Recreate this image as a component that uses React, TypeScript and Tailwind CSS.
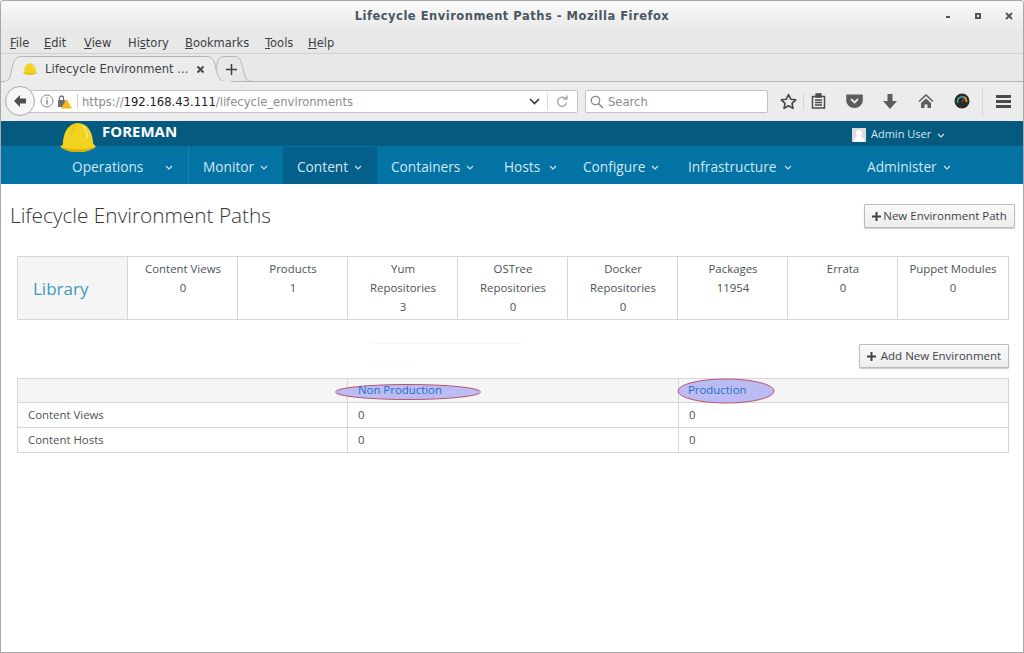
import React from "react";

const chrome = "[font-family:DejaVu_Sans,sans-serif]";
const web = "[font-family:Open_Sans,sans-serif]";

function Chevron({ className = "" }: { className?: string }) {
  return (
    <svg width="8" height="5" viewBox="0 0 8 5" className={className}>
      <path d="M1 1l3 3 3-3" fill="none" stroke="currentColor" strokeWidth="1.1" />
    </svg>
  );
}

function Hat({ size = 38 }: { size?: number }) {
  return (
    <svg width={size} height={size * 0.84} viewBox="0 0 38 32">
      <path d="M3 24C3 11 9 1 19 1s16 10 16 22l3 3c-4 4-11 6-19 6S4 30 0 26z" fill="#f2d31f" />
      <path d="M0 26c4 4 11 6 19 6s15-2 19-6c-6 2-12 3-19 3S6 28 0 26z" fill="#d8b00d" />
      <path d="M24 4c3 3 5 8 5 13" stroke="#f9ec8a" strokeWidth="1.500" fill="none" />
      <path d="M17 2c-3 4-5 9-5 14" stroke="#e2c116" strokeWidth="1.200" fill="none" />
    </svg>
  );
}

function Menu({ u, rest, pre = "", left }: { u: string; rest: string; pre?: string; left: string }) {
  return (
    <span className={`absolute top-[36px] text-[11.5px] leading-[15px] text-[#3a3f42] ${left}`}>
      {pre}
      <span className="underline">{u}</span>
      {rest}
    </span>
  );
}

function NavItem({ label, left, chev }: { label: string; left: string; chev: string }) {
  return (
    <>
      <span className={`absolute top-[157px] text-[13.7px] leading-[20px] text-[#d3e8f2] ${left}`}>{label}</span>
      <Chevron className={`absolute top-[165px] text-[#d3e8f2] ${chev}`} />
    </>
  );
}

function Stat({ lines, value }: { lines: string[]; value: string }) {
  return (
    <div className="w-[110px] h-full border-l border-[#d6d6d6] flex flex-col items-center pt-[2px] pl-[1px] text-[11.4px] leading-[19px] text-[#4d5258]">
      {lines.map((l) => (
        <div key={l}>{l}</div>
      ))}
      <div>{value}</div>
    </div>
  );
}

function Button({ label, className, gap }: { label: string; className: string; gap: string }) {
  return (
    <div
      className={`absolute flex items-center justify-center h-[24px] border border-[#bbb] rounded-[1px] bg-gradient-to-b from-[#fafafa] to-[#ededed] shadow-[0_1px_1px_rgba(0,0,0,0.2)] text-[11.5px] font-medium text-[#3f4448] ${gap} ${className}`}
    >
      <svg width="9" height="9" viewBox="0 0 9 9">
        <path d="M4.5 0v9M0 4.5h9" stroke="#3f4448" strokeWidth="2" />
      </svg>
      <span>{label}</span>
    </div>
  );
}

export default function App() {
  return (
    <div className={`relative w-[1024px] h-[653px] overflow-hidden bg-white ${web}`}>
      {/* title bar */}
      <div className={`absolute left-0 top-0 w-full h-[32px] bg-gradient-to-b from-[#fafafa] to-[#e8e8e8] ${chrome}`}>
        <div className="text-center pt-[9px] text-[11.5px] leading-[15px] font-bold tracking-[0.5px] text-[#4c5660]">
          Lifecycle Environment Paths - Mozilla Firefox
        </div>
      </div>
      <div className="absolute left-[946px] top-[16px] w-[4px] h-[2px] bg-[#4c5660]" />
      <div className="absolute left-[975px] top-[13px] w-[6px] h-[6px] border-2 border-[#4c5660]" />
      <svg className="absolute left-[1005px] top-[12px]" width="8" height="8" viewBox="0 0 8 8">
        <path d="M1 1l6 6M7 1l-6 6" stroke="#4c5660" strokeWidth="1.8" />
      </svg>

      {/* menu bar */}
      <div className="absolute left-0 top-[32px] w-full h-[22px] bg-[#e8e8e8] border-b border-[#cfcfcf]" />
      <div className={chrome}>
        <Menu left="left-[10px]" u="F" rest="ile" />
        <Menu left="left-[44px]" u="E" rest="dit" />
        <Menu left="left-[84px]" u="V" rest="iew" />
        <Menu left="left-[128px]" pre="Hi" u="s" rest="tory" />
        <Menu left="left-[185px]" u="B" rest="ookmarks" />
        <Menu left="left-[265px]" u="T" rest="ools" />
        <Menu left="left-[308px]" u="H" rest="elp" />
      </div>

      {/* tab bar */}
      <div className="absolute left-0 top-[54px] w-full h-[28px] bg-[#e8e8e8] border-b border-[#b4b4b4]" />
      <svg className="absolute left-0 top-[54px]" width="262" height="29" viewBox="0 0 262 29">
        <path d="M0 27.5h4c5 0 6-4 8-13 2-9 4-12 10-12h184c6 0 8 3 10 12 2 9 4 13 9 13" fill="#ececec" stroke="#b4b4b4" />
        <path d="M216 14.5c2-9 3-12 8-12h10c5 0 7 3 9 12 2 9 3 13 9 13" fill="none" stroke="#b4b4b4" />
        <path d="M5 28h226" stroke="#ececec" strokeWidth="2" />
      </svg>
      <div className="absolute left-[23px] top-[63px]">
        <Hat size={14} />
      </div>
      <div className={`absolute left-[45px] top-[61px] text-[11.6px] leading-[16px] text-[#3f4447] ${chrome}`}>
        Lifecycle Environment ...
      </div>
      <svg className="absolute left-[196px] top-[65px]" width="9" height="9" viewBox="0 0 9 9">
        <path d="M1.500 1.500l6 6M7.500 1.500l-6 6" stroke="#4a4a4a" strokeWidth="2" />
      </svg>
      <svg className="absolute left-[225px] top-[63px]" width="13" height="13" viewBox="0 0 13 13">
        <path d="M6.500 1v11M1 6.500h11" stroke="#3f3f3f" strokeWidth="1.5" />
      </svg>

      {/* nav bar */}
      <div className="absolute left-0 top-[82px] w-full h-[39px] bg-[#ececec]" />
      <div className={`absolute left-[24px] top-[90px] w-[554px] h-[23px] bg-white border border-[#c2c2c2] rounded-[2px] ${chrome}`}>
        <div className="absolute left-[57px] top-[3px] text-[11.6px] leading-[17px] text-[#8c8c8c] whitespace-nowrap">
          https://<span className="text-[#222]">192.168.43.111</span>/lifecycle_environments
        </div>
      </div>
      <div className="absolute left-[5px] top-[86px] w-[30px] h-[30px] rounded-full bg-[#f6f6f6] border border-[#a8a8a8]" />
      <svg className="absolute left-[13px] top-[94px]" width="14" height="14" viewBox="0 0 14 14">
        <path d="M7 1L1 7l6 6V9.500h6v-5H7z" fill="#4f4f4f" />
      </svg>
      <svg className="absolute left-[40px] top-[94px]" width="14" height="14" viewBox="0 0 14 14">
        <circle cx="7" cy="7" r="6" fill="none" stroke="#8a8a8a" />
        <path d="M7 6v4.500M7 3.500v1.300" stroke="#777" strokeWidth="1.300" />
      </svg>
      <svg className="absolute left-[57px] top-[94px]" width="15" height="15" viewBox="0 0 15 15">
        <rect x="1" y="6" width="7" height="7" fill="#6e6e6e" />
        <path d="M2.500 6V4a2 2 0 0 1 4 0v2" fill="none" stroke="#6e6e6e" strokeWidth="1.300" />
        <path d="M9.500 5L15 14.500H4z" fill="#f2b91a" />
      </svg>
      <div className="absolute left-[77px] top-[94px] w-px h-[15px] bg-[#cfcfcf]" />
      <svg className="absolute left-[529px] top-[98px]" width="11" height="7" viewBox="0 0 11 7">
        <path d="M1 1l4.500 4.500L10 1" fill="none" stroke="#3a3a3a" strokeWidth="1.600" />
      </svg>
      <div className="absolute left-[547px] top-[93px] w-px h-[17px] bg-[#dcdcdc]" />
      <svg className="absolute left-[556px] top-[95px]" width="13" height="13" viewBox="0 0 13 13">
        <path d="M10.500 7.500A4.500 4.500 0 1 1 8.500 3H11M11 .5V4H7.500" fill="none" stroke="#a6a6a6" strokeWidth="1.300" />
      </svg>
      <div className={`absolute left-[585px] top-[90px] w-[183px] h-[23px] bg-white border border-[#c2c2c2] rounded-[2px] ${chrome}`}>
        <svg className="absolute left-[4px] top-[4px]" width="14" height="14" viewBox="0 0 14 14">
          <circle cx="5.500" cy="5.500" r="4.200" fill="none" stroke="#888" strokeWidth="1.300" />
          <path d="M8.500 8.500L13 13" stroke="#888" strokeWidth="1.500" />
        </svg>
        <div className="absolute left-[22px] top-[3px] text-[11.6px] leading-[17px] text-[#8a8a8a]">Search</div>
      </div>

      {/* toolbar icons */}
      <svg className="absolute left-[780px] top-[93px]" width="17" height="17" viewBox="0 0 17 17">
        <path d="M8.500 1.500l2.200 4.700 5 .6-3.700 3.500 1 5.100-4.500-2.600L4 15.400l1-5.100L1.300 6.800l5-.6z" fill="none" stroke="#444" strokeWidth="1.600" strokeLinejoin="round" />
      </svg>
      <div className="absolute left-[803px] top-[93px] w-px h-[17px] bg-[#d6d6d6]" />
      <svg className="absolute left-[811px] top-[93px]" width="15" height="16" viewBox="0 0 15 16">
        <rect x="1.500" y="3.500" width="12" height="11.500" fill="none" stroke="#4a4a4a" strokeWidth="1.500" />
        <path d="M5 1h5v3H5zM4 7h7M4 9.500h7M4 12h7" stroke="#4a4a4a" strokeWidth="1.300" fill="#4a4a4a" />
      </svg>
      <svg className="absolute left-[846px] top-[93px]" width="17" height="16" viewBox="0 0 17 16">
        <path d="M1 1.500h15a.8.8 0 0 1 .8.8V7c0 4.500-3.800 8-8.300 8S.2 11.500.200 7V2.300A.8.8 0 0 1 1 1.500z" fill="#5c5c5c" />
        <path d="M5 6l3.500 3.500L12 6" fill="none" stroke="#ececec" strokeWidth="1.800" />
      </svg>
      <svg className="absolute left-[883px] top-[94px]" width="14" height="15" viewBox="0 0 14 15">
        <path d="M4.500 0h5v7H14l-7 8-7-8h4.500z" fill="#5c5c5c" />
      </svg>
      <svg className="absolute left-[918px] top-[93px]" width="16" height="16" viewBox="0 0 16 16">
        <path d="M8 1L0.500 8l1 1L8 3l6.500 6 1-1zM3 10l5-4.500 5 4.500v5H9.500v-3.500h-3V15H3z" fill="#5c5c5c" />
      </svg>
      <svg className="absolute left-[954px] top-[93px]" width="16" height="16" viewBox="0 0 16 16">
        <circle cx="8" cy="8" r="7.500" fill="#2a2a2a" />
        <path d="M3.800 10a4.500 4.500 0 0 1 3-6" fill="none" stroke="#2bb673" strokeWidth="1.700" />
        <path d="M6.800 4a4.500 4.500 0 0 1 3.500.3" fill="none" stroke="#30a8d8" strokeWidth="1.700" />
        <path d="M10.300 4.300a4.500 4.500 0 0 1 2 4.700" fill="none" stroke="#e8a020" strokeWidth="1.700" />
        <path d="M8 9l2-3.500" stroke="#d04040" strokeWidth="1" />
      </svg>
      <div className="absolute left-[982px] top-[88px] w-px h-[28px] bg-[#d6d6d6]" />
      <div className="absolute left-[996px] top-[95px] w-[15px] h-[13px] flex flex-col justify-between">
        <div className="h-[3px] bg-[#4a4a4a]" />
        <div className="h-[3px] bg-[#4a4a4a]" />
        <div className="h-[3px] bg-[#4a4a4a]" />
      </div>

      {/* foreman header */}
      <div className="absolute left-0 top-[121px] w-full h-[25px] bg-[#045a7f]" />
      <div className="absolute left-0 top-[146px] w-full h-[38px] bg-[#0273a3]" />
      <div className="absolute left-[283px] top-[147px] w-[94px] h-[37px] bg-[#02608a]" />
      <div className="absolute left-[188px] top-[146px] w-px h-[38px] bg-[#1a82ad]" />
      <div className="absolute left-[60px] top-[122px]">
        <Hat size={36} />
      </div>
      <div className="absolute left-[102px] top-[121px] text-[15px] leading-[20px] font-bold text-white">FOREMAN</div>
      <div className="absolute left-[852px] top-[128px] w-[14px] h-[14px] bg-[#dcdcdc] overflow-hidden">
        <div className="absolute left-[4px] top-[2px] w-[6px] h-[6px] rounded-full bg-white" />
        <div className="absolute left-[2px] top-[8px] w-[10px] h-[8px] rounded-t-full bg-white" />
      </div>
      <div className="absolute left-[871px] top-[126px] text-[11px] leading-[15px] text-[#d3e8f2]">Admin User</div>
      <Chevron className="absolute left-[937px] top-[133px] text-[#d3e8f2]" />
      <NavItem label="Operations" left="left-[72px]" chev="left-[165px]" />
      <NavItem label="Monitor" left="left-[203px]" chev="left-[260px]" />
      <NavItem label="Content" left="left-[297px]" chev="left-[354px]" />
      <NavItem label="Containers" left="left-[391px]" chev="left-[466px]" />
      <NavItem label="Hosts" left="left-[504px]" chev="left-[549px]" />
      <NavItem label="Configure" left="left-[583px]" chev="left-[651px]" />
      <NavItem label="Infrastructure" left="left-[688px]" chev="left-[784px]" />
      <NavItem label="Administer" left="left-[867px]" chev="left-[943px]" />

      {/* page */}
      <div className="absolute left-[10px] top-[201px] text-[20.8px] leading-[28px] font-light text-[#363636] whitespace-nowrap">
        Lifecycle Environment Paths
      </div>
      <Button label="New Environment Path" className="left-[864px] top-[204px] w-[151px]" gap="gap-[2px]" />

      <div className="absolute left-[17px] top-[256px] w-[992px] h-[64px] border border-[#d6d6d6] flex">
        <div className="w-[109px] h-full bg-[#f5f5f5] flex items-center pl-[15px] pt-[2px] text-[17px] text-[#3a9cbc]">Library</div>
        <Stat lines={["Content Views"]} value="0" />
        <Stat lines={["Products"]} value="1" />
        <Stat lines={["Yum", "Repositories"]} value="3" />
        <Stat lines={["OSTree", "Repositories"]} value="0" />
        <Stat lines={["Docker", "Repositories"]} value="0" />
        <Stat lines={["Packages"]} value="11954" />
        <Stat lines={["Errata"]} value="0" />
        <Stat lines={["Puppet Modules"]} value="0" />
      </div>

      {/* erased smudge */}
      <div className="absolute left-[370px] top-[343px] w-[155px] h-px bg-[#f7f7f7]" />
      <div className="absolute left-[370px] top-[362px] w-[50px] h-px bg-[#fbfbfb]" />

      <Button label="Add New Environment" className="left-[859px] top-[344px] w-[150px]" gap="gap-[5px]" />

      <div className="absolute left-[17px] top-[378px] w-[992px] h-[75px] border border-[#d6d6d6] text-[11.4px] text-[#4d5258]">
        <div className="flex h-[24px] bg-[#f5f5f5] border-b border-[#d6d6d6]">
          <div className="w-[329px]" />
          <div className="w-[331px] border-l border-[#d6d6d6]" />
          <div className="flex-1 border-l border-[#d6d6d6]" />
        </div>
        <div className="flex h-[25px] items-center border-b border-[#d6d6d6]">
          <div className="w-[329px] pl-[10px]">Content Views</div>
          <div className="w-[331px] h-full border-l border-[#d6d6d6] pl-[10px] flex items-center">0</div>
          <div className="flex-1 h-full border-l border-[#d6d6d6] pl-[10px] flex items-center">0</div>
        </div>
        <div className="flex h-[24px] items-center">
          <div className="w-[329px] pl-[10px]">Content Hosts</div>
          <div className="w-[331px] h-full border-l border-[#d6d6d6] pl-[10px] flex items-center">0</div>
          <div className="flex-1 h-full border-l border-[#d6d6d6] pl-[10px] flex items-center">0</div>
        </div>
      </div>

      {/* annotated ellipses */}
      <svg className="absolute left-[330px] top-[376px]" width="460" height="30" viewBox="0 0 460 30">
        <ellipse cx="78" cy="16" rx="72.5" ry="7.5" fill="#bcbcf5" stroke="#b9546e" strokeWidth="1" />
        <ellipse cx="396" cy="15" rx="48" ry="12" fill="#bcbcf5" stroke="#b9546e" strokeWidth="1" />
      </svg>
      <div className="absolute left-[358px] top-[381px] text-[11.4px] leading-[17px] font-medium text-[#1f6fc4]">Non Production</div>
      <div className="absolute left-[688px] top-[381px] text-[11.4px] leading-[17px] font-medium text-[#1f6fc4]">Production</div>

      {/* window frame */}
      <div className="absolute left-0 top-0 w-[1024px] h-[653px] border border-[#a9a9a9] rounded-t-[3px] pointer-events-none" />
    </div>
  );
}
